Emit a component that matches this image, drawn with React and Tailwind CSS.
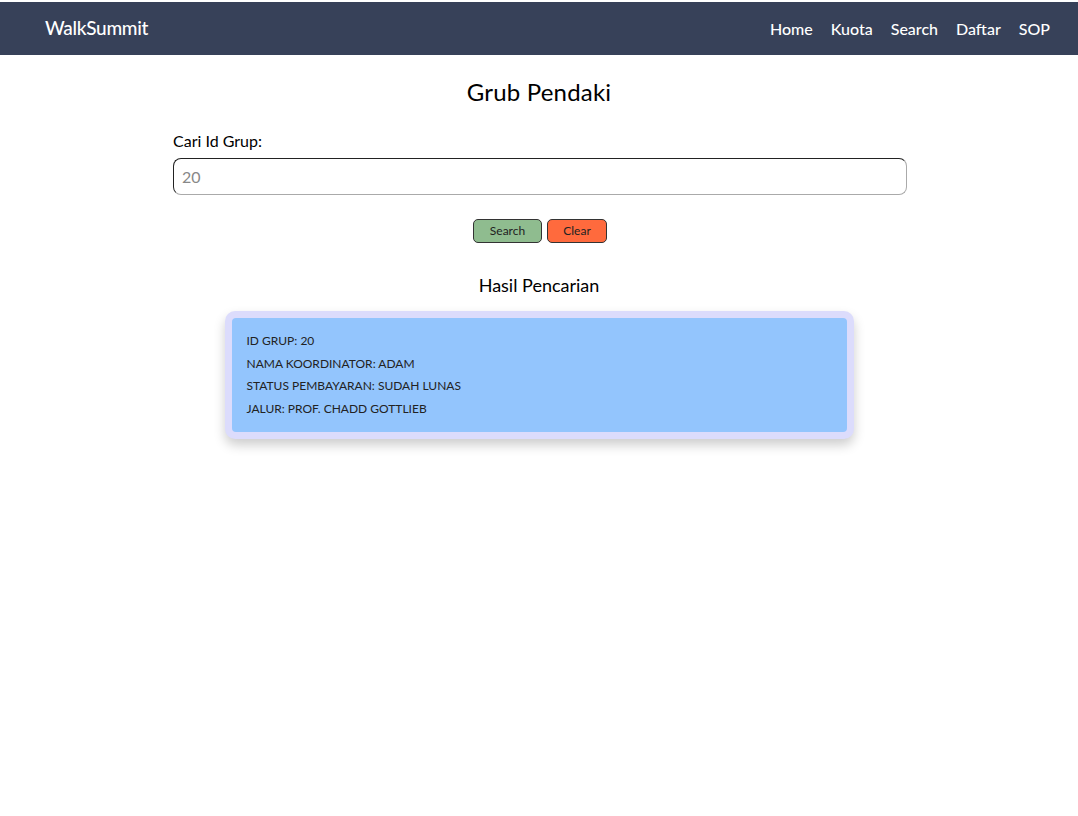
import React, { useState } from "react";

const result = {
  id: "20",
  koordinator: "ADAM",
  status: "SUDAH LUNAS",
  jalur: "PROF. CHADD GOTTLIEB",
};

function Navbar() {
  const links = ["Home", "Kuota", "Search", "Daftar", "SOP"];
  return (
    <nav className="mt-[2px] h-[53px] bg-[#374159] flex items-center justify-between pl-[45px] pr-[28px]">
      <span className="text-white text-[19px] font-medium tracking-[-0.3px]">WalkSummit</span>
      <ul className="flex items-center gap-[18px]">
        {links.map((l) => (
          <li key={l} className="text-white text-[16px] font-medium">
            {l}
          </li>
        ))}
      </ul>
    </nav>
  );
}

export default function App() {
  const [query, setQuery] = useState("");

  return (
    <div className="min-h-[816px] bg-white font-['Lato',sans-serif] text-black">
      <Navbar />
      <main className="flex flex-col items-center">
        <h1 className="mt-[21px] text-[24px] leading-[32px] tracking-[0.2px]">Grub Pendaki</h1>

        <div className="w-[734px] mt-[21px] translate-x-[1px]">
          <label className="block text-[16px] leading-[24px]">Cari Id Grup:</label>
          <input
            className="mt-[5px] w-full h-[37px] rounded-[8px] border border-[#222] border-b-[#aaa] border-r-[#aaa] px-[8px] text-[16px] placeholder:text-[#888] outline-none"
            placeholder="20"
            value={query}
            onChange={(e) => setQuery(e.target.value)}
          />
        </div>

        <div className="mt-[24px] flex gap-[5px] translate-x-[1px]">
          <button className="w-[69px] h-[24px] rounded-[5px] border border-[#333] bg-[#8fbc8f] text-[12px] text-[#222]">
            Search
          </button>
          <button
            className="w-[60px] h-[24px] rounded-[5px] border border-[#333] bg-[#ff6a3d] text-[12px] text-[#222]"
            onClick={() => setQuery("")}
          >
            Clear
          </button>
        </div>

        <h2 className="mt-[30px] text-[18px] leading-[24px]">Hasil Pencarian</h2>

        <div className="mt-[14px] w-[629px] rounded-[10px] bg-[#dcdcfc] p-[7px] shadow-[0_6px_12px_rgba(0,0,0,0.2)]">
          <div className="rounded-[4px] bg-[#93c5fd] px-[15px] py-[12px] text-[12px] leading-[22.5px] text-[#222]">
            <p>ID GRUP: {result.id}</p>
            <p>NAMA KOORDINATOR: {result.koordinator}</p>
            <p>STATUS PEMBAYARAN: {result.status}</p>
            <p>JALUR: {result.jalur}</p>
          </div>
        </div>
      </main>
    </div>
  );
}
